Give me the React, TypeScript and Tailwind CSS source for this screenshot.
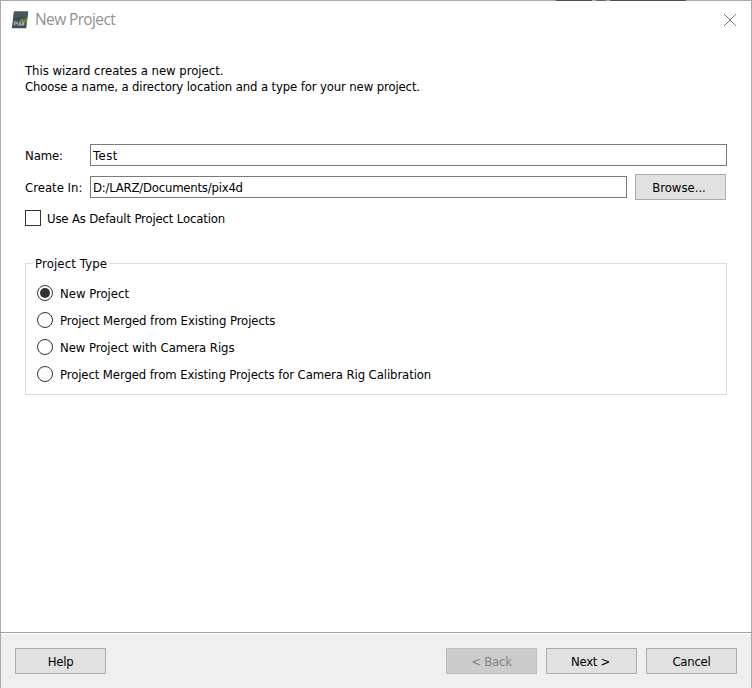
import { useState } from 'react'
import type { ReactNode } from 'react'
import clsx from 'clsx'

const projectTypes = [
  { label: 'New Project', tracking: 'tracking-[-0.02px]' },
  { label: 'Project Merged from Existing Projects', tracking: 'tracking-[-0.08px]' },
  { label: 'New Project with Camera Rigs', tracking: 'tracking-[-0.05px]' },
  { label: 'Project Merged from Existing Projects for Camera Rig Calibration', tracking: 'tracking-[-0.1px]' },
]

interface DialogButtonProps {
  children: ReactNode
  disabled?: boolean
  className?: string
}

function DialogButton({ children, disabled, className = 'tracking-[-0.25px]' }: DialogButtonProps) {
  return (
    <button
      disabled={disabled}
      className={clsx(
        'h-[26px] w-[91px] shrink-0 border pt-px text-center leading-6 whitespace-pre',
        disabled ? 'border-[#bfbfbf] bg-[#cccccc] text-[#838383]' : 'border-[#adadad] bg-[#e1e1e1] text-black',
        className,
      )}
    >
      {children}
    </button>
  )
}

function AppIcon() {
  return (
    <svg width="18" height="18" viewBox="0 0 18 18">
      <path d="M3 0.5H17.2L15.2 17.2H0.8Z" fill="#3d4c57" />
      <path d="M3 0.5H17.2L16.5 6H2.3Z" fill="#465763" />
      <path d="M7.5 10.5 11 7.5l2 1.2 3.4-2.4-.8 5.4-2.7 1-2.5-1.5Z" fill="#768529" />
      <path
        d="M3.4 14.8V10.8h1.6q1.2 1-.2 2.1H3.6M6.7 11.3v3.4M8 11.3l1.8 3.4M9.8 11.3 8 14.7M12.2 10.8l-1.6 2.8H13.4M12.5 11.5v3.2"
        fill="none"
        stroke="#b3babd"
        strokeWidth="1.1"
        strokeOpacity="0.85"
      />
    </svg>
  )
}

function TitleBar() {
  return (
    <div className="flex h-[37px] items-center pl-[10px] pr-[15px]">
      <AppIcon />
      <span className="-mt-[2px] ml-[6px] font-['Open_Sans','Noto_Sans',sans-serif] text-[15.5px] leading-5 tracking-[-0.62px] text-[#929292]">
        New Project
      </span>
      <svg className="ml-auto" width="12" height="12" viewBox="0 0 12 12">
        <path d="M0 0 12 12M12 0 0 12" stroke="#7a7a7a" strokeWidth="1" />
      </svg>
    </div>
  )
}

export default function App() {
  const [selected, setSelected] = useState(0)

  return (
    <div className="relative flex h-[688px] w-[752px] flex-col border border-b-0 border-[#a9a9a9] bg-white font-['DejaVu_Sans_Condensed','DejaVu_Sans',sans-serif] text-[13px] leading-4 text-black">
      {/* Window behind, peeking over the top edge */}
      <div className="absolute -top-px left-[555px] flex h-px w-[130px] gap-[4px]">
        <span className="w-[36px] bg-[#475059]" />
        <span className="w-[10px] bg-[#66666a]" />
        <span className="flex-1 bg-[#475059]" />
      </div>

      <TitleBar />

      <main className="flex-1 px-6 pt-[25px] whitespace-nowrap">
        <p className="tracking-[-0.03px]">This wizard creates a new project.</p>
        <p className="tracking-[-0.13px]">Choose a name, a directory location and a type for your new project.</p>

        <div className="mt-[49px] flex h-[22px] items-center">
          <label className="w-[65px] pt-px tracking-[-0.1px]">Name:</label>
          <input
            className="h-[22px] w-[637px] border border-[#7a7a7a] bg-white px-[2px] pt-px tracking-[0.5px] outline-none"
            defaultValue="Test"
          />
        </div>

        <div className="mt-2 flex h-[26px] items-center">
          <label className="w-[65px] pt-px">Create In:</label>
          <input
            className="mr-2 h-[22px] w-[537px] border border-[#7a7a7a] bg-white px-[2px] pt-px tracking-[-0.22px] outline-none"
            defaultValue="D:/LARZ/Documents/pix4d"
          />
          <DialogButton className="pr-[3px] tracking-[0px]">Browse...</DialogButton>
        </div>

        <label className="mt-[10px] flex h-4 items-center">
          <span className="mr-[6px] size-4 border border-[#333]" />
          <span className="pt-px tracking-[-0.16px]">Use As Default Project Location</span>
        </label>

        <fieldset className="relative mt-[37px] h-[132px] w-[702px] border border-[#dcdcdc]">
          <span className="absolute -top-[8px] left-[7px] bg-white px-[2px] tracking-[0.15px]">Project Type</span>
          <div className="flex flex-col gap-[11px] pt-[21px] pl-[11px]">
            {projectTypes.map((type, i) => (
              <label key={type.label} className="flex h-4 items-center" onClick={() => setSelected(i)}>
                <span className="mr-[7px] flex size-4 items-center justify-center rounded-full border border-[#333]">
                  {selected === i && <span className="size-[10px] rounded-full bg-[#333]" />}
                </span>
                <span className={clsx('pt-px', type.tracking)}>{type.label}</span>
              </label>
            ))}
          </div>
        </fieldset>
      </main>

      <footer className="flex h-14 border-t border-[#a0a0a0] bg-[#efefef] shadow-[inset_0_1px_0_#fff] pt-[15px] pr-[14px] pl-[14px]">
        <DialogButton>Help</DialogButton>
        <div className="ml-auto flex gap-[9px]">
          <DialogButton disabled>{'< Back'}</DialogButton>
          <DialogButton className="pr-[2px] tracking-[-0.3px]">{'Next >'}</DialogButton>
          <DialogButton>Cancel</DialogButton>
        </div>
      </footer>
    </div>
  )
}
